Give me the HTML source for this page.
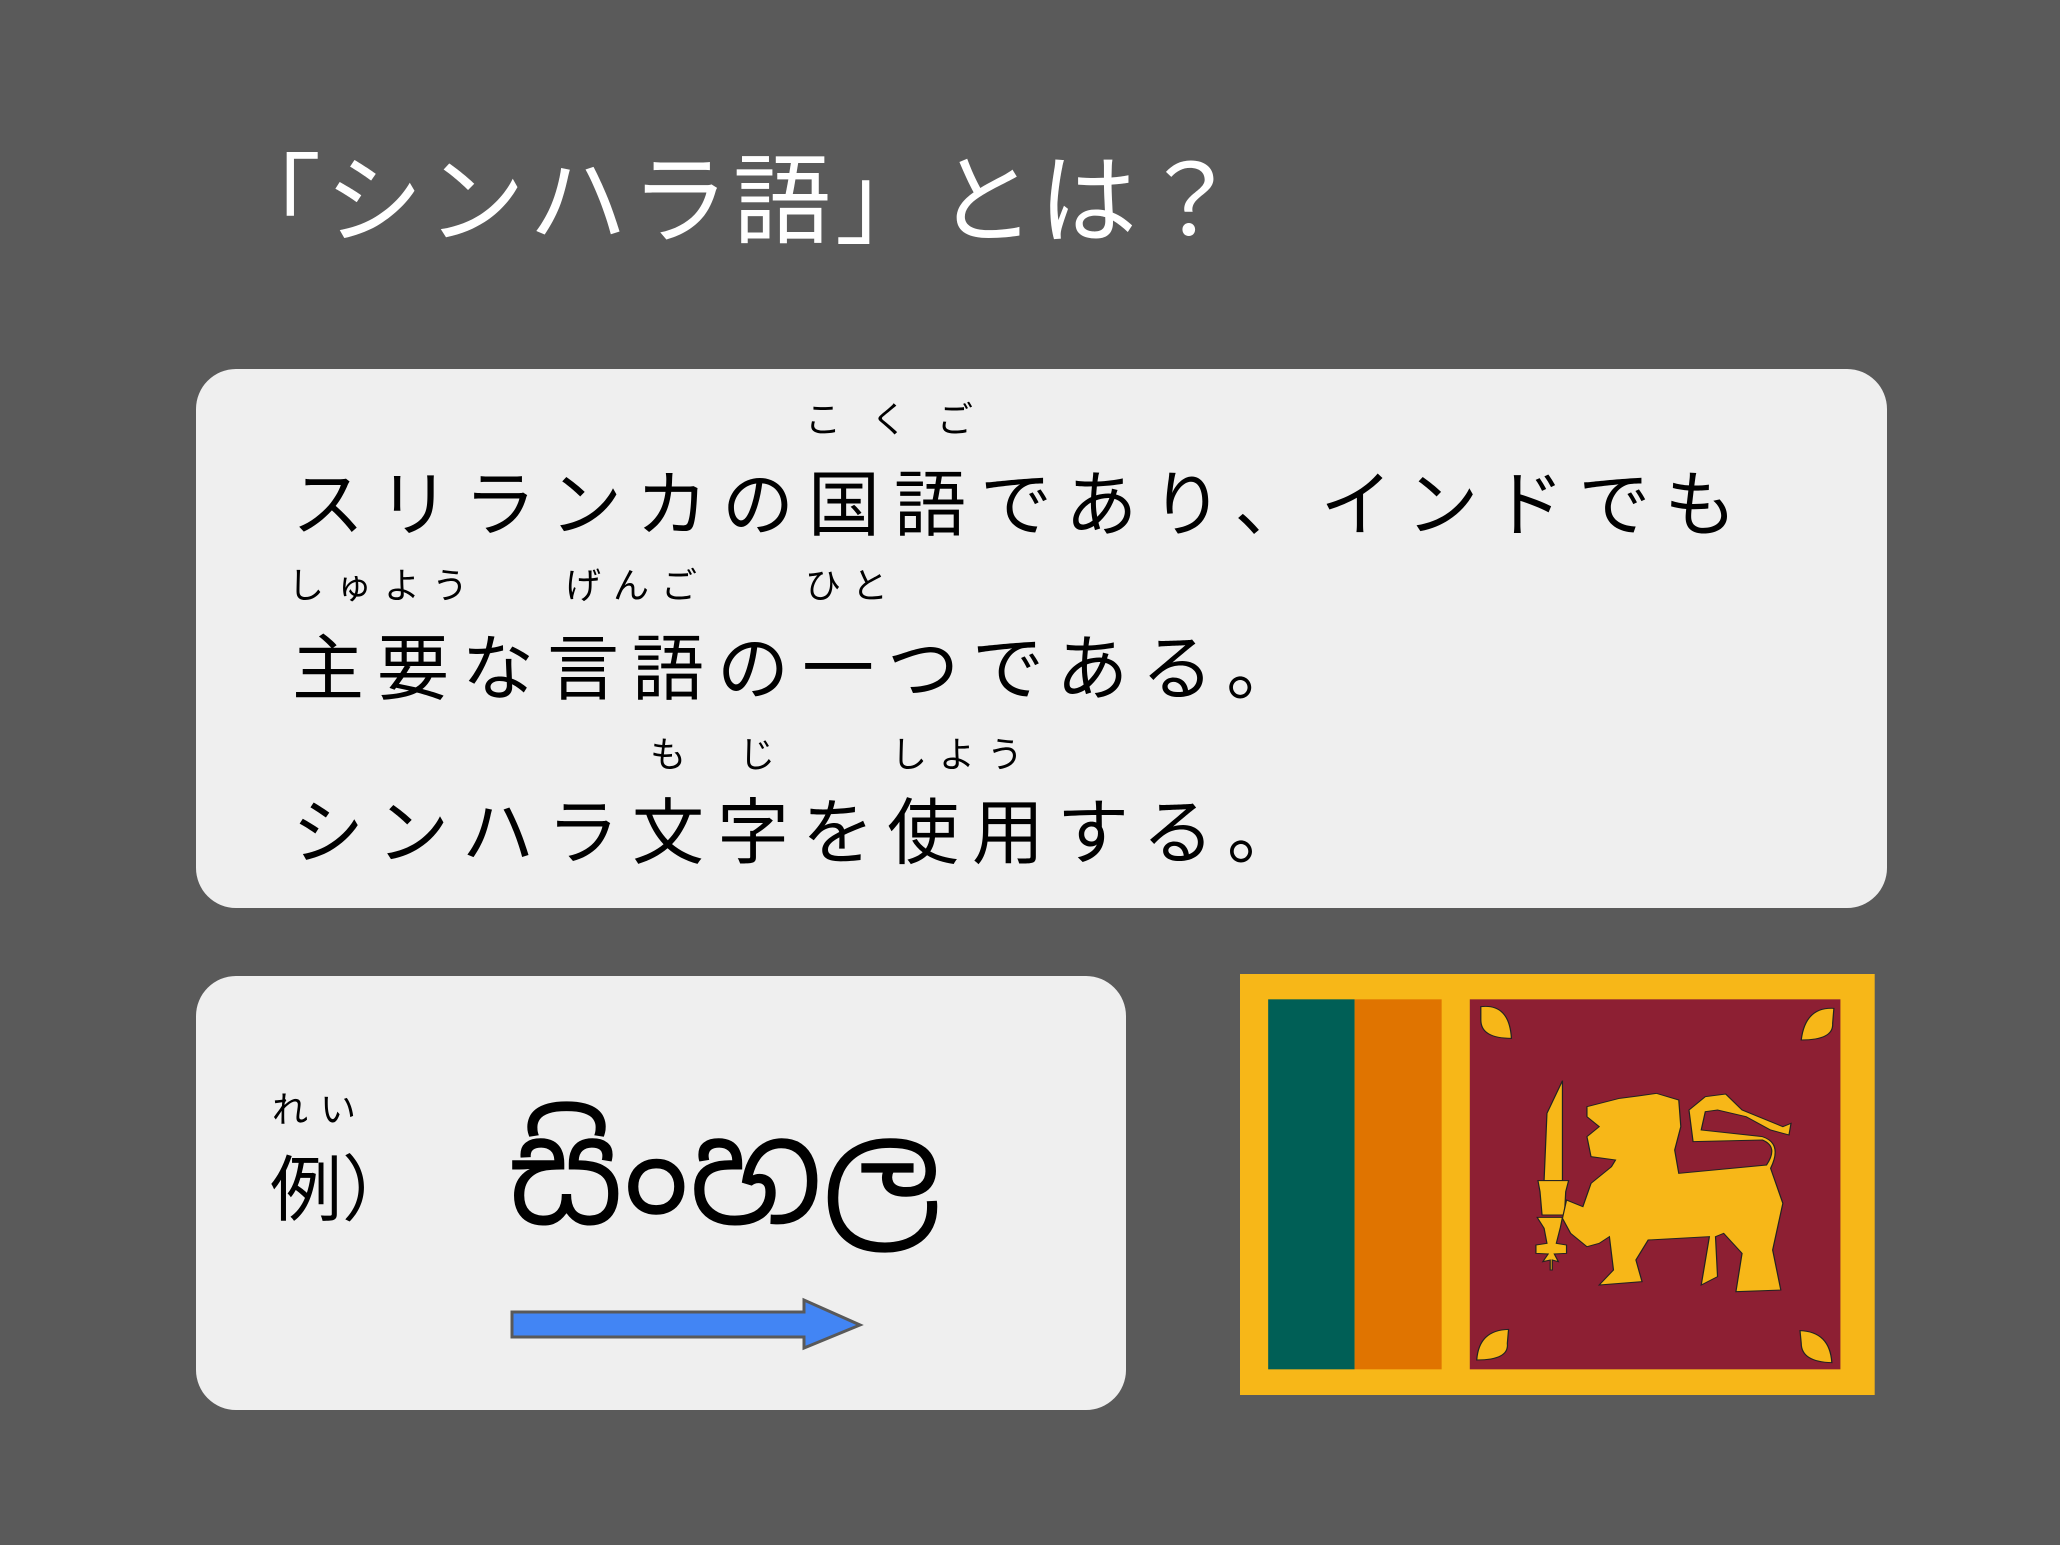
<!DOCTYPE html>
<html><head><meta charset="utf-8"><style>
html,body{margin:0;padding:0}
body{width:2060px;height:1545px;background:#5a5a5a;position:relative;overflow:hidden;font-family:"Liberation Sans","Noto Sans CJK JP",sans-serif}
.a{position:absolute;white-space:nowrap;line-height:1}
.box{position:absolute;background:#efefef;border-radius:40px}
.l{font-size:72px;letter-spacing:13px;color:#000}
.r{font-size:36px;letter-spacing:12px;color:#000}
</style></head><body>
<div class="a" style="left:223px;top:152px;font-size:98px;letter-spacing:4px;color:#fff">「シンハラ語」とは？</div>

<div class="box" style="left:196px;top:369px;width:1691px;height:539px"></div>
<div class="a r" style="left:805px;top:402px;letter-spacing:30px">こくご</div>
<div class="a l" style="left:292px;top:470px;letter-spacing:14px">スリランカの国語であり、インドでも</div>
<div class="a r" style="left:288px;top:568px">しゅよう</div>
<div class="a r" style="left:565px;top:568px">げんご</div>
<div class="a r" style="left:805px;top:568px">ひと</div>
<div class="a l" style="left:292px;top:634px">主要な言語の一つである。</div>
<div class="a r" style="left:650px;top:737px;letter-spacing:53px">もじ</div>
<div class="a r" style="left:891px;top:737px">しよう</div>
<div class="a l" style="left:292px;top:798px">シンハラ文字を使用する。</div>

<div class="box" style="left:196px;top:976px;width:930px;height:434px"></div>
<div class="a r" style="left:272px;top:1092px">れい</div>
<div class="a" style="left:270px;top:1155px;font-size:72px">例）</div>
<div class="a" style="left:508px;top:1095px;font-size:140px;line-height:160px;font-family:'Noto Sans Sinhala','Iskoola Pota','DejaVu Sans',sans-serif">සිංහල</div>
<svg class="a" style="left:0;top:0" width="2060" height="1545">
<polygon points="512,1312 804,1312 804,1300 860,1325 804,1348 804,1337 512,1337" fill="#4285f4" stroke="#595959" stroke-width="3"/>
</svg>

<svg class="a" style="left:1240px;top:970px" width="640" height="430" viewBox="0 0 1568 1290" preserveAspectRatio="none">
<rect x="0" y="12" width="1555" height="1263" fill="#f7b718"/>
<rect x="69" y="88" width="212" height="1110" fill="#005f56"/>
<rect x="281" y="88" width="213" height="1110" fill="#e07400"/>
<rect x="563" y="88" width="908" height="1110" fill="#8d1f33"/>
<g fill="#f7b718" stroke="#222" stroke-width="3">
<path d="M590,110 Q660,100 665,205 Q590,205 590,150 Z"/>
<path d="M1455,115 Q1385,110 1375,210 Q1455,210 1452,160 Z"/>
<path d="M658,1078 Q585,1080 580,1170 Q660,1170 655,1120 Z"/>
<path d="M1372,1082 Q1445,1085 1450,1178 Q1375,1175 1375,1120 Z"/>
<path d="M790,332 L752,430 L745,632 L790,632 Z"/>
<path d="M730,632 L805,632 L798,665 L795,735 L740,735 L735,665 Z"/>
<path d="M728,742 L790,742 L785,772 L775,820 L800,825 L800,850 L770,852 L780,875 L765,870 L765,900 L760,900 L760,870 L742,875 L755,852 L725,850 L725,825 L752,820 L745,775 Z"/>
<path d="M850,410 L930,385 L975,378 L1020,370 L1075,390 L1080,470 L1065,540 L1075,610 L1290,585 Q1320,530 1280,510 L1110,515 L1100,420 L1140,380 L1190,372 L1230,420 L1330,470 L1350,460 L1345,495 L1300,480 L1240,440 L1170,420 L1140,425 L1130,480 L1280,500 Q1330,520 1300,595 L1330,700 L1305,840 L1325,960 L1215,965 L1230,850 L1185,790 L1165,800 L1170,920 L1130,945 L1150,800 L1000,810 L970,870 L985,935 L880,945 L915,900 L905,800 L880,820 L850,830 L810,790 L790,745 L800,690 L840,710 L860,640 L910,590 L920,570 L860,560 L850,500 L880,470 L850,440 Z"/>
</g>
</svg>
</body></html>
